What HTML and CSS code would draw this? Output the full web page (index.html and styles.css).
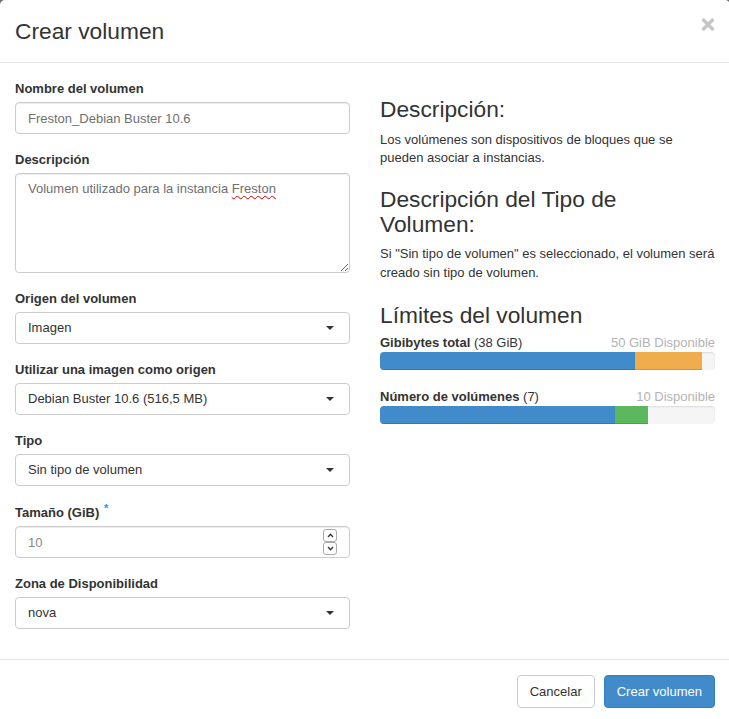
FILE: index.html
```html
<!DOCTYPE html>
<html lang="es">
<head>
<meta charset="utf-8">
<title>Crear volumen</title>
<link rel="stylesheet" href="styles.css">
</head>
<body>
<div class="modal">
  <div class="modal-header">
    <h4 class="modal-title">Crear volumen</h4>
    <button class="close" type="button" aria-label="Cerrar">
      <svg width="14" height="15" viewBox="0 0 14 15"><path d="M2.5 3 L11.5 12 M11.5 3 L2.5 12" stroke="#c6c6c6" stroke-width="3.4" stroke-linecap="round" fill="none"/></svg>
    </button>
  </div>
  <div class="modal-body">
    <div class="col-left">
      <div class="form-group">
        <label class="control-label">Nombre del volumen</label>
        <input class="form-control muted" type="text" value="Freston_Debian Buster 10.6">
      </div>
      <div class="form-group">
        <label class="control-label">Descripción</label>
        <div class="textarea-wrap">
          <textarea class="form-control textarea muted" spellcheck="false">Volumen utilizado para la instancia Freston</textarea>
          <div class="spell-layer" aria-hidden="true">Volumen utilizado para la instancia <span class="misspelled">Freston</span></div>
        </div>
      </div>
      <div class="form-group">
        <label class="control-label">Origen del volumen</label>
        <div class="form-control select"><span>Imagen</span><span class="caret"></span></div>
      </div>
      <div class="form-group">
        <label class="control-label">Utilizar una imagen como origen</label>
        <div class="form-control select"><span>Debian Buster 10.6 (516,5 MB)</span><span class="caret"></span></div>
      </div>
      <div class="form-group">
        <label class="control-label">Tipo</label>
        <div class="form-control select"><span>Sin tipo de volumen</span><span class="caret"></span></div>
      </div>
      <div class="form-group">
        <label class="control-label has-required">Tamaño (GiB) <span class="required">*</span></label>
        <div class="number-wrap">
          <input class="form-control number" type="text" value="10">
          <div class="spinner" aria-hidden="true">
            <span class="spin-btn"><svg width="7" height="5" viewBox="0 0 7 5"><path d="M1 4 L3.5 1.3 L6 4" stroke="#333" stroke-width="1.3" fill="none"/></svg></span>
            <span class="spin-btn"><svg width="7" height="5" viewBox="0 0 7 5"><path d="M1 1 L3.5 3.7 L6 1" stroke="#333" stroke-width="1.3" fill="none"/></svg></span>
          </div>
        </div>
      </div>
      <div class="form-group">
        <label class="control-label">Zona de Disponibilidad</label>
        <div class="form-control select"><span>nova</span><span class="caret"></span></div>
      </div>
    </div>
    <div class="col-right">
      <h3 class="first">Descripción:</h3>
      <p>Los volúmenes son dispositivos de bloques que se pueden asociar a instancias.</p>
      <h3>Descripción del Tipo de Volumen:</h3>
      <p>Si "Sin tipo de volumen" es seleccionado, el volumen será creado sin tipo de volumen.</p>
      <h3 class="limits-title">Límites del volumen</h3>
      <div class="quota">
        <div class="quota-row"><span><strong>Gibibytes total</strong> (38 GiB)</span><span class="avail">50 GiB Disponible</span></div>
        <div class="progress">
          <div class="bar bar-used" style="width:76%"></div>
          <div class="bar bar-warning" style="width:20%"></div>
        </div>
      </div>
      <div class="quota">
        <div class="quota-row"><span><strong>Número de volúmenes</strong> (7)</span><span class="avail">10 Disponible</span></div>
        <div class="progress">
          <div class="bar bar-used" style="width:70%"></div>
          <div class="bar bar-success" style="width:10%"></div>
        </div>
      </div>
    </div>
  </div>
  <div class="modal-footer">
    <button class="btn btn-default" type="button">Cancelar</button>
    <button class="btn btn-primary" type="button">Crear volumen</button>
  </div>
</div>
</body>
</html>
```
FILE: styles.css
```css
html, body {
  margin: 0;
  padding: 0;
  overflow: hidden;
  background: #6e6e6e;
}
body {
  font-family: "Liberation Sans", Helvetica, Arial, sans-serif;
  font-size: 13px;
  line-height: 1.42857;
  color: #333;
}
.modal {
  width: 730px;
  background: #fff;
  border-radius: 5px 5px 0 0;
  min-height: 760px;
}
.modal-header {
  display: flex;
  justify-content: space-between;
  align-items: flex-start;
  padding: 15px;
  border-bottom: 1px solid #e5e5e5;
}
.modal-title {
  margin: 0;
  font-size: 22.75px;
  font-weight: normal;
  line-height: 1.42857;
  color: #333;
}
.close {
  margin: 2px 0 0;
  padding: 0;
  border: 0;
  background: transparent;
  line-height: 0;
  cursor: pointer;
}
.modal-body {
  display: grid;
  grid-template-columns: 335px 335px;
  column-gap: 30px;
  padding: 15px;
}
.form-group {
  margin-bottom: 15px;
}
.control-label {
  display: block;
  padding-top: 3px;
  margin-bottom: 5px;
  font-weight: bold;
  line-height: 16px;
  color: #333;
}
.control-label.has-required {
  line-height: 17px;
}
.required {
  color: #428bca;
  font-size: 11px;
  line-height: 0;
  vertical-align: super;
  margin-left: 1px;
}
.form-control {
  display: block;
  box-sizing: border-box;
  width: 100%;
  height: 32px;
  margin: 0;
  padding: 6px 12px;
  font-family: inherit;
  font-size: 13px;
  line-height: 1.42857;
  color: #333;
  background: #fff;
  border: 1px solid #ccc;
  border-radius: 4px;
  box-shadow: inset 0 1px 1px rgba(0, 0, 0, 0.075);
  outline: none;
}
.muted {
  color: #6f6f6f;
}
.textarea-wrap {
  position: relative;
}
.textarea {
  height: 100px;
  resize: vertical;
}
.spell-layer {
  position: absolute;
  left: 0;
  top: 0;
  right: 0;
  padding: 7px 13px;
  color: transparent;
  pointer-events: none;
}
.misspelled {
  text-decoration: underline wavy #d40000;
  text-decoration-thickness: 1px;
  text-underline-offset: 2px;
  text-decoration-skip-ink: none;
}
.select {
  display: flex;
  justify-content: space-between;
  align-items: center;
  color: #333;
  box-shadow: none;
}
.caret {
  width: 0;
  height: 0;
  margin-right: 3px;
  border-top: 4px solid #333;
  border-left: 4px solid transparent;
  border-right: 4px solid transparent;
}
.number-wrap {
  position: relative;
}
.number {
  color: #888;
}
.spinner {
  position: absolute;
  right: 13px;
  top: 3px;
  display: flex;
  flex-direction: column;
}
.spin-btn {
  display: flex;
  align-items: center;
  justify-content: center;
  box-sizing: border-box;
  width: 14px;
  height: 13px;
  border: 1px solid #aaa;
  border-radius: 3px;
  background: #fff;
}
.col-right h3 {
  margin: 19px 0 7px;
  font-size: 22.75px;
  font-weight: normal;
  line-height: 1.1;
  color: #333;
}
.col-right h3.first {
  margin-top: 18.5px;
}
.col-right h3.limits-title {
  margin-top: 21px;
  margin-bottom: 5.5px;
}
.col-right p {
  margin: 0 0 10px;
  padding-top: 1.5px;
}
.quota-row {
  display: flex;
  justify-content: space-between;
  line-height: 18px;
}
.avail {
  color: #b3b3b3;
}
.progress {
  display: flex;
  height: 18px;
  margin-bottom: 18px;
  overflow: hidden;
  background: #f5f5f5;
  border-radius: 4px;
  box-shadow: inset 0 1px 2px rgba(0, 0, 0, 0.1);
}
.bar {
  height: 100%;
  box-shadow: inset 0 -1px 0 rgba(0, 0, 0, 0.15);
}
.bar-used {
  background: #428bca;
}
.bar-warning {
  background: #f0ad4e;
}
.bar-success {
  background: #5cb85c;
}
.modal-footer {
  display: flex;
  justify-content: flex-end;
  gap: 9px;
  padding: 15px;
  border-top: 1px solid #e5e5e5;
}
.btn {
  box-sizing: border-box;
  height: 33px;
  padding: 6px 12px;
  font-family: inherit;
  font-size: 13px;
  line-height: 1.42857;
  border: 1px solid transparent;
  border-radius: 4px;
  cursor: pointer;
}
.btn-default {
  color: #333;
  background: #fff;
  border-color: #ccc;
}
.btn-primary {
  color: #fff;
  background: #428bca;
  border-color: #357ebd;
}
```
